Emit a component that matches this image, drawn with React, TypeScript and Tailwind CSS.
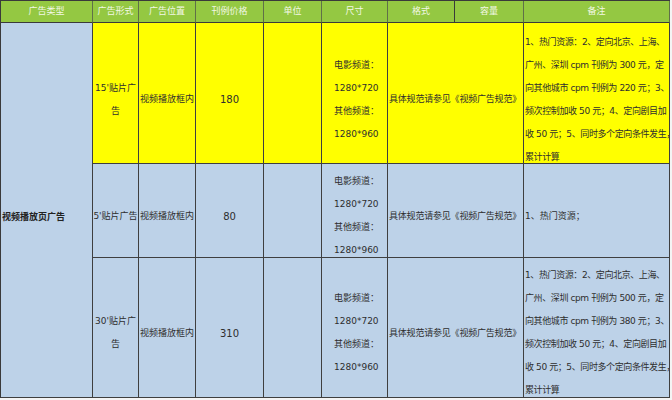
import React from "react";

const FONT = { fontFamily: '"DejaVu Sans", "Noto Sans CJK SC", sans-serif' };

const Y = "bg-[#ffff00]";
const B = "bg-[#bdd2e8]";

function H({ children, dark }: { children?: React.ReactNode; dark?: boolean }) {
  return (
    <div
      className={`flex items-center justify-center border-r border-b ${
        dark ? "border-r-[#3a3a3a]" : "border-r-[#5f7048]"
      } border-b-[#3a3a3a] bg-[#94c842] text-[9px] text-[#f3f8e6] whitespace-nowrap overflow-hidden`}
    >
      {children}
    </div>
  );
}

function C({
  children,
  bg,
  pt,
  align = "center",
  span2,
  pl,
}: {
  children?: React.ReactNode;
  bg: string;
  pt: string;
  align?: "center" | "left";
  span2?: boolean;
  pl?: string;
}) {
  return (
    <div
      className={`flex items-center overflow-hidden border-r border-b border-[#3f3f3f] ${bg} ${pt} ${
        align === "center" ? "justify-center text-center" : "justify-start text-left"
      } ${span2 ? "col-span-2" : ""} ${pl ?? ""} text-[9px] leading-[23px] text-[#2e2e2e]`}
    >
      {children}
    </div>
  );
}

function Size() {
  return (
    <div className="whitespace-nowrap">
      电影频道：
      <br />
      1280*720
      <br />
      其他频道：
      <br />
      1280*960
    </div>
  );
}

function Notes({ a, b }: { a: string; b: string }) {
  return (
    <div className="whitespace-nowrap tracking-[-0.4px]">
      1、热门资源：2、定向北京、上海、
      <br />
      广州、深圳 cpm 刊例为 {a} 元，定
      <br />
      向其他城市 cpm 刊例为 {b} 元；3、
      <br />
      频次控制加收 50 元；4、定向剧目加
      <br />
      收 50 元；5、同时多个定向条件发生，
      <br />
      累计计算
    </div>
  );
}

export default function App() {
  return (
    <div className="w-[672px] h-[400px] bg-[#f4f4f4] overflow-hidden" style={FONT}>
      <div className="grid grid-cols-[92px_46px_57px_68px_58px_66px_67px_69px_146px] grid-rows-[22px_141px_94px_140px] w-fit border-l border-t border-[#3a3a3a] bg-white">
        <H>广告类型</H>
        <H>广告形式</H>
        <H>广告位置</H>
        <H>刊例价格</H>
        <H>单位</H>
        <H>尺寸</H>
        <H dark>格式</H>
        <H>容量</H>
        <H>备注</H>

        <div className="row-span-3 flex items-center overflow-hidden border-r border-b border-[#3f3f3f] bg-[#bdd2e8] pt-[15px] pl-[1px] text-[9px] font-bold text-[#222] whitespace-nowrap">
          视频播放页广告
        </div>

        {/* Row 1 */}
        <C bg={Y} pt="pt-[13px]">
          15'贴片广
          <br />告
        </C>
        <C bg={Y} pt="pt-[13px]">
          <span className="whitespace-nowrap">视频播放框内</span>
        </C>
        <C bg={Y} pt="pt-[13px]">
          <span className="text-[10px]">180</span>
        </C>
        <C bg={Y} pt="pt-[13px]" />
        <C bg={Y} pt="pt-[13px]" align="left" pl="pl-[12px]">
          <Size />
        </C>
        <C bg={Y} pt="pt-[13px]" span2 align="left" pl="pl-[1px]">
          <span className="whitespace-nowrap tracking-[-0.2px]">具体规范请参见《视频广告规范》</span>
        </C>
        <C bg={Y} pt="pt-[13px]" align="left" pl="pl-[1px]">
          <Notes a="300" b="220" />
        </C>

        {/* Row 2 */}
        <C bg={B} pt="pt-[11px]">
          <span className="whitespace-nowrap">5'贴片广告</span>
        </C>
        <C bg={B} pt="pt-[11px]">
          <span className="whitespace-nowrap">视频播放框内</span>
        </C>
        <C bg={B} pt="pt-[11px]">
          <span className="text-[10px]">80</span>
        </C>
        <C bg={B} pt="pt-[11px]" />
        <C bg={B} pt="pt-[11px]" align="left" pl="pl-[12px]">
          <Size />
        </C>
        <C bg={B} pt="pt-[11px]" span2 align="left" pl="pl-[1px]">
          <span className="whitespace-nowrap tracking-[-0.2px]">具体规范请参见《视频广告规范》</span>
        </C>
        <C bg={B} pt="pt-[11px]" align="left" pl="pl-[1px]">
          <span className="whitespace-nowrap">1、热门资源；</span>
        </C>

        {/* Row 3 */}
        <C bg={B} pt="pt-[11px]">
          30'贴片广
          <br />告
        </C>
        <C bg={B} pt="pt-[11px]">
          <span className="whitespace-nowrap">视频播放框内</span>
        </C>
        <C bg={B} pt="pt-[11px]">
          <span className="text-[10px]">310</span>
        </C>
        <C bg={B} pt="pt-[11px]" />
        <C bg={B} pt="pt-[11px]" align="left" pl="pl-[12px]">
          <Size />
        </C>
        <C bg={B} pt="pt-[11px]" span2 align="left" pl="pl-[1px]">
          <span className="whitespace-nowrap tracking-[-0.2px]">具体规范请参见《视频广告规范》</span>
        </C>
        <C bg={B} pt="pt-[11px]" align="left" pl="pl-[1px]">
          <Notes a="500" b="380" />
        </C>
      </div>
    </div>
  );
}
